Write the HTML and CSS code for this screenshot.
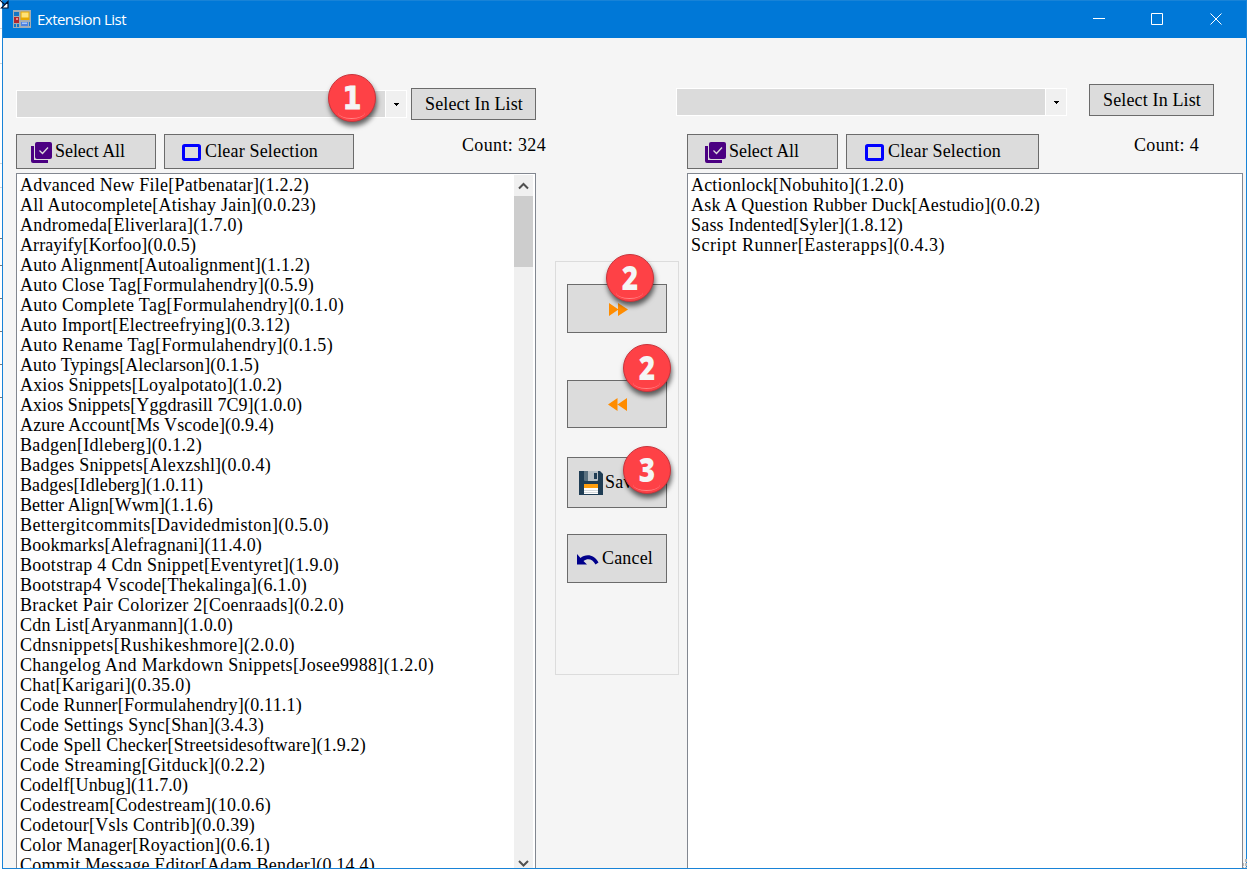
FILE: index.html
```html
<!DOCTYPE html>
<html lang="en">
<head>
<meta charset="utf-8">
<title>Extension List</title>
<link rel="stylesheet" href="styles.css">
</head>
<body>
<svg class="defs" width="0" height="0">
  <symbol id="all" viewBox="0 0 22 22"><path fill="#4b0082" d="M6 0h13a2 2 0 0 1 2 2v13a2 2 0 0 1-2 2H6a2 2 0 0 1-2-2V2a2 2 0 0 1 2-2zM0 4h3v14h14v3H2a2 2 0 0 1-2-2z"/><path d="M8.500 8.500l3 3 5.500-6" fill="none" stroke="#dcdcdc" stroke-width="1.300"/></symbol>
  <symbol id="clear" viewBox="0 0 19 17"><rect x="1.500" y="1.500" width="16" height="14" rx="1.200" fill="none" stroke="#00f" stroke-width="3"/></symbol>
  <symbol id="caret" viewBox="0 0 5 3"><path d="M0 0h5v1H4v1H3v1H2V2H1V1H0z"/></symbol>
</svg>
<div class="desktop">
  <div class="behind"><i></i><i></i><i></i><i></i><i class="dark"></i><i class="dark"></i><i class="dark"></i><i class="dark"></i><i class="dark"></i><i class="dark"></i></div>
  <main class="window">
    <header class="titlebar">
      <svg class="appicon" width="18" height="18" viewBox="0 0 18 18"><rect width="18" height="18" fill="#a3adb5"/><path fill="#1476c6" d="M1 2h5v4H1zM1 14h2v3H1zM4 14h2v3H4zM16 12h1v4h-1z"/><rect x="1" y="7" width="5" height="6" fill="#b3262c"/><rect x="3" y="8" width="2" height="2" fill="#f08b87"/><rect x="7.500" y="1.500" width="9" height="8.500" fill="#e9a900"/><rect x="8.500" y="2.500" width="7" height="5" fill="#ffe277"/><rect x="8" y="12" width="7" height="4" fill="#4e83e2"/><rect x="9" y="12.500" width="5" height="1.500" fill="#a9c7fa"/></svg>
      <span class="caption" data-w="89">Extension List</span>
      <svg class="controls" width="130" height="12" viewBox="0 0 130 12" fill="none" stroke="#fff"><path d="M0 5.500h12M58.500.500h11v11h-11zM117.500.500l11 11M128.500.500l-11 11"/></svg>
    </header>
    <div class="content">
      <section class="pane left">
        <div class="row filter">
          <div class="combo"><div class="field"></div><div class="drop"><svg width="5" height="3"><use href="#caret"/></svg></div></div>
          <button class="btn find"><span data-w="98">Select In List</span></button>
        </div>
        <div class="row tools">
          <button class="btn all"><svg width="22" height="22"><use href="#all"/></svg><span data-w="70">Select All</span></button>
          <button class="btn clear"><svg width="19" height="17"><use href="#clear"/></svg><span data-w="113">Clear Selection</span></button>
          <span class="count" data-w="84">Count: 324</span>
        </div>
        <div class="listbox">
          <ul class="items">
            <li><span data-w="289">Advanced New File[Patbenatar](1.2.2)</span></li>
            <li><span data-w="296">All Autocomplete[Atishay Jain](0.0.23)</span></li>
            <li><span data-w="223">Andromeda[Eliverlara](1.7.0)</span></li>
            <li><span data-w="176">Arrayify[Korfoo](0.0.5)</span></li>
            <li><span data-w="290">Auto Alignment[Autoalignment](1.1.2)</span></li>
            <li><span data-w="294">Auto Close Tag[Formulahendry](0.5.9)</span></li>
            <li><span data-w="324">Auto Complete Tag[Formulahendry](0.1.0)</span></li>
            <li><span data-w="270">Auto Import[Electreefrying](0.3.12)</span></li>
            <li><span data-w="313">Auto Rename Tag[Formulahendry](0.1.5)</span></li>
            <li><span data-w="239">Auto Typings[Aleclarson](0.1.5)</span></li>
            <li><span data-w="262">Axios Snippets[Loyalpotato](1.0.2)</span></li>
            <li><span data-w="282">Axios Snippets[Yggdrasill 7C9](1.0.0)</span></li>
            <li><span data-w="254">Azure Account[Ms Vscode](0.9.4)</span></li>
            <li><span data-w="182">Badgen[Idleberg](0.1.2)</span></li>
            <li><span data-w="251">Badges Snippets[Alexzshl](0.0.4)</span></li>
            <li><span data-w="183">Badges[Idleberg](1.0.11)</span></li>
            <li><span data-w="193">Better Align[Wwm](1.1.6)</span></li>
            <li><span data-w="309">Bettergitcommits[Davidedmiston](0.5.0)</span></li>
            <li><span data-w="242">Bookmarks[Alefragnani](11.4.0)</span></li>
            <li><span data-w="319">Bootstrap 4 Cdn Snippet[Eventyret](1.9.0)</span></li>
            <li><span data-w="287">Bootstrap4 Vscode[Thekalinga](6.1.0)</span></li>
            <li><span data-w="324">Bracket Pair Colorizer 2[Coenraads](0.2.0)</span></li>
            <li><span data-w="213">Cdn List[Aryanmann](1.0.0)</span></li>
            <li><span data-w="275">Cdnsnippets[Rushikeshmore](2.0.0)</span></li>
            <li><span data-w="414">Changelog And Markdown Snippets[Josee9988](1.2.0)</span></li>
            <li><span data-w="171">Chat[Karigari](0.35.0)</span></li>
            <li><span data-w="282">Code Runner[Formulahendry](0.11.1)</span></li>
            <li><span data-w="244">Code Settings Sync[Shan](3.4.3)</span></li>
            <li><span data-w="346">Code Spell Checker[Streetsidesoftware](1.9.2)</span></li>
            <li><span data-w="245">Code Streaming[Gitduck](0.2.2)</span></li>
            <li><span data-w="168">Codelf[Unbug](11.7.0)</span></li>
            <li><span data-w="251">Codestream[Codestream](10.0.6)</span></li>
            <li><span data-w="235">Codetour[Vsls Contrib](0.0.39)</span></li>
            <li><span data-w="250">Color Manager[Royaction](0.6.1)</span></li>
            <li><span data-w="355">Commit Message Editor[Adam Bender](0.14.4)</span></li>
          </ul>
          <div class="scrollbar">
            <svg width="19" height="21" fill="none" stroke="#505050" stroke-width="2"><path d="M5 13.500l4.500-4.500 4.500 4.500"/></svg>
            <div class="thumb"></div>
            <svg class="down" width="19" height="9" fill="none" stroke="#505050" stroke-width="2"><path d="M5 2l4.500 4.500L14 2"/></svg>
          </div>
        </div>
      </section>
      <section class="group">
        <button class="btn add"><svg width="19" height="14" viewBox="0 0 19 14"><path fill="#ff8c00" d="M0 0l9.500 6.500L0 13zM9 0l10 6.500L9 13z"/></svg></button>
        <button class="btn remove"><svg width="19" height="14" viewBox="0 0 19 14"><path fill="#ff8c00" d="M9.500 0v13L0 6.500zM19 0v13L9.500 6.500z"/></svg></button>
        <button class="btn save"><svg width="24" height="24" viewBox="0 0 24 24"><path fill="#1f3d54" d="M0 0h21l3 3v21H0z"/><path fill="#b8c0c5" d="M5 0h14v9a1 1 0 0 1-1 1H9z"/><path fill="#59707f" d="M5 0h4v10H6a1 1 0 0 1-1-1z"/><rect x="15" y="2" width="3" height="6" fill="#1f3d54"/><path fill="#fff" d="M5 13h14v10H5z"/><path fill="#ff9f0f" d="M5 13h14v4H5z"/><path d="M5 19.500h14M5 21.500h14" stroke="#d3d8db"/></svg><span data-w="36">Save</span></button>
        <button class="btn cancel"><svg width="22" height="12" viewBox="0 0 22 12"><path fill="#00008b" d="M0 0l3.500 4C8 0 17-.500 21.500 8.500L18.500 10.500C15.500 4.500 10.500 4 6.500 7L10 10.500H0z"/></svg><span data-w="51">Cancel</span></button>
      </section>
      <section class="pane right">
        <div class="row filter">
          <div class="combo"><div class="field"></div><div class="drop"><svg width="5" height="3"><use href="#caret"/></svg></div></div>
          <button class="btn find"><span data-w="98">Select In List</span></button>
        </div>
        <div class="row tools">
          <button class="btn all"><svg width="22" height="22"><use href="#all"/></svg><span data-w="70">Select All</span></button>
          <button class="btn clear"><svg width="19" height="17"><use href="#clear"/></svg><span data-w="113">Clear Selection</span></button>
          <span class="count" data-w="65">Count: 4</span>
        </div>
        <div class="listbox">
          <ul class="items">
            <li><span data-w="213">Actionlock[Nobuhito](1.2.0)</span></li>
            <li><span data-w="349">Ask A Question Rubber Duck[Aestudio](0.0.2)</span></li>
            <li><span data-w="212">Sass Indented[Syler](1.8.12)</span></li>
            <li><span data-w="254">Script Runner[Easterapps](0.4.3)</span></li>
          </ul>
        </div>
      </section>
    </div>
  </main>
  <div class="badge b1"><b>1</b></div>
  <div class="badge b2"><b>2</b></div>
  <div class="badge b3"><b>2</b></div>
  <div class="badge b4"><b>3</b></div>
  <svg class="pointer" width="9" height="9" viewBox="0 0 9 9"><path d="M0 0l5 5M8 1.500V8H1.500z" fill="#fff" stroke="#001433" stroke-width="1.200"/></svg>
  <svg class="grip" width="4" height="9" viewBox="0 0 4 9" fill="#b8b8b8"><path d="M2 0h2v3H2zM0 4h1v3H0zM2 4h2v3H2zM0 8h1v1H0zM2 8h2v1H2z"/></svg>
</div>
<script src="fit.js"></script>
</body>
</html>
```
FILE: styles.css
```css
* { box-sizing: border-box; }
body { margin: 0; overflow: hidden; background: #fff; }
.defs { position: absolute; }
.desktop { position: relative; display: flex; width: 1247px; height: 869px; overflow: hidden; font: 18px/20px "Liberation Serif", serif; color: #000; }
.behind { width: 2px; flex: none; padding-top: 28px; display: flex; flex-direction: column; }
.behind i { height: 1px; flex: none; background: #d5d5d5; margin-bottom: 34px; }
.behind i:nth-child(2) { margin-bottom: 99px; }
.behind i:nth-child(3) { margin-bottom: 23px; }
.behind i:nth-child(4) { margin-bottom: 50px; }
.behind .dark { background: #777; margin-bottom: 32px; }
.behind .dark:nth-child(5) { margin-bottom: 26px; }
.window { width: 1245px; height: 869px; border: 1px solid #1883d7; background: #f5f5f5; display: flex; flex-direction: column; }
.titlebar { height: 37px; flex: none; background: #0078d7; display: flex; align-items: center; padding: 0 23px 2px 10px; color: #fff; font: 15px/20px "Open Sans", sans-serif; }
.appicon { margin-top: 1px; }
.caption { margin-left: 6px; }
.controls { margin-left: auto; }
.content { display: flex; flex: 1; min-height: 0; }
.pane { display: flex; flex-direction: column; flex: none; }
.left { width: 552px; padding: 50px 19px 0 13px; }
.right { width: 569px; margin-left: -1px; padding: 46px 2px 0 0; }
.row { display: flex; }
.filter { height: 32px; align-items: center; }
.combo { width: 391px; height: 28px; border: 1px solid #fff; display: flex; }
.field { flex: 1; background: #dbdbdb; border-right: 1px solid #fff; }
.drop { width: 20px; background: #f0f0f0; display: flex; align-items: center; justify-content: center; }
.btn { margin: 0; padding: 0; border: 1px solid #6b6b6b; background: #dcdcdc; font: inherit; color: inherit; display: flex; align-items: center; white-space: nowrap; flex: none; text-align: left; }
.btn span { display: block; }
.find { width: 125px; height: 32px; padding-left: 13px; padding-bottom: 1px; }
.left .find { margin-left: 4px; }
.right .find { margin-left: 22px; }
.right .combo { margin-top: 4px; }
.tools { margin-top: 14px; height: 35px; }
.tools .btn { height: 35px; }
.tools .btn span { padding-bottom: 2px; }
.tools .btn svg { margin-top: 2px; }
.left .all { width: 140px; padding-left: 14px; }
.all span { margin-left: 2px; }
.left .clear { width: 190px; margin-left: 8px; padding-left: 17px; }
.clear span { margin-left: 4px; }
.count { white-space: nowrap; padding-top: 1px; }
.left .count { margin-left: 108px; }
.right .tools { margin: 18px 0 0 11px; }
.right .all { width: 151px; padding-left: 17px; }
.right .clear { width: 193px; margin-left: 8px; padding-left: 18px; }
.right .count { margin-left: 95px; }
.listbox { flex: 1; min-height: 0; margin-top: 4px; overflow: hidden; background: #fff; border: 1px solid #828790; border-bottom: 0; display: flex; padding: 1px 2px 0 3px; }
.right .listbox { margin-left: 11px; }
.items { list-style: none; margin: 0; padding: 0; flex: 1; white-space: nowrap; }
.items li { height: 20px; }
.scrollbar { width: 19px; background: #f0f0f0; display: flex; flex-direction: column; }
.thumb { height: 71px; background: #cdcdcd; flex: none; }
.scrollbar svg { flex: none; display: block; }
.down { margin-top: auto; }
.group { width: 124px; height: 414px; flex: none; margin: 223px -2px 0 0; border: 1px solid #dcdcdc; padding: 22px 11px 0; }
.group .btn { width: 100px; }
.group .add { height: 49px; padding: 3px 0 0 41px; }
.group .remove { height: 48px; margin-top: 47px; padding: 1px 0 0 40px; }
.group .save { height: 51px; padding-left: 11px; margin-top: 29px; }
.save span { margin: -2px 0 0 2px; }
.group .cancel { height: 49px; margin-top: 26px; padding-left: 9px; }
.cancel svg { margin-top: 3px; }
.cancel span { margin: -2px 0 0 3px; }
/* numbered callouts laid over the window */
.badge { position: absolute; width: 48px; height: 48px; border-radius: 50%; background: #fe4146; border: 1.500px solid #c9343c; box-shadow: 1px 4px 5px rgba(0,0,0,.6); color: #f5f5f5; text-align: center; font: 800 33px/46px "Open Sans", sans-serif; }
.badge b { display: block; font-weight: 800; transform: scaleX(.85); }
.badge::after { content: ""; position: absolute; left: 9px; bottom: 2px; width: 27px; height: 12px; border-bottom: 1.500px solid #ff8587; border-radius: 50%; }
.b1 { left: 328px; top: 74px; font-family: "DejaVu Sans", sans-serif; font-size: 32px; }
.b1 b { -webkit-text-stroke: 1px #f5f5f5; }
.b2 { left: 606px; top: 254px; }
.b3 { left: 623px; top: 344px; }
.b4 { left: 623px; top: 446px; }
.pointer { position: absolute; left: 0; top: 0; }
.grip { position: absolute; left: 1243px; top: 859px; }
```
FILE: fit.js
```js
// Spread each label's letters so that it takes its nominal width.
document.querySelectorAll('[data-w]').forEach(function (el) {
  var range = document.createRange();
  range.selectNodeContents(el);
  var natural = range.getBoundingClientRect().width;
  el.style.letterSpacing = ((Number(el.dataset.w) - natural) / el.textContent.length) + 'px';
});
```
